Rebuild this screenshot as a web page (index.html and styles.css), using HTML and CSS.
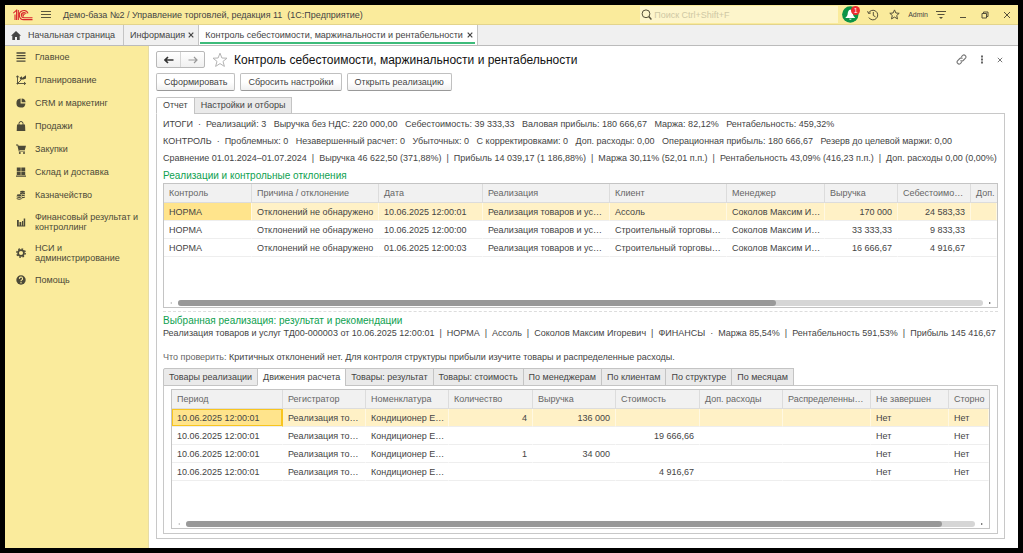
FILE: index.html
```html
<!DOCTYPE html>
<html lang="ru">
<head>
<meta charset="utf-8">
<title>Контроль себестоимости, маржинальности и рентабельности</title>
<link rel="stylesheet" href="styles.css">
</head>
<body>
<div class="window">
  <header class="titlebar">
    <svg class="logo" width="20" height="12" viewBox="0 0 20 12" fill="none" stroke="#d9252b" stroke-width="1.1"><path d="M0.3 4.2 3.6 1.2V11M2 5.4V11M5.3 1V11"/><path d="M15 4.4A4.5 4.5 0 1 0 11 10.6H19.5"/><path d="M13.2 4.8A2.6 2.6 0 1 0 11 8.7H19.5"/><path d="M11.8 5.6A1 1 0 1 0 11 6.9"/></svg>
    <button class="icon-btn" aria-label="Меню"><svg width="10" height="9" viewBox="0 0 10 9" stroke="#5b563c" stroke-width="1"><path d="M0 1.5H10M0 4.5H10M0 7.5H10"/></svg></button>
    <div class="app-name">Демо-база №2 / Управление торговлей, редакция 11&nbsp; (1С:Предприятие)</div>
    <label class="search">
      <svg width="11" height="11" viewBox="0 0 11 11" fill="none" stroke="#55503a"><circle cx="5" cy="4.8" r="3.9"/><path d="M7.8 7.6 10.4 10.4" stroke-width="1.4"/></svg>
      <input type="search" placeholder="Поиск Ctrl+Shift+F" aria-label="Поиск">
    </label>
    <button class="icon-btn bell" aria-label="Уведомления"><svg width="17" height="17" viewBox="0 0 17 17"><circle cx="8.3" cy="8.5" r="8.2" fill="#0c9446"/><path d="M8.3 3.6C6 4.2 5.9 6.4 5.6 8.5 5.4 10 4 11 3.3 12H13.3C12.6 11 11.2 10 11 8.5 10.7 6.4 10.6 4.2 8.3 3.6ZM7 12.8A1.4 1.4 0 0 0 9.7 12.8Z" fill="#fff"/></svg><span class="badge">1</span></button>
    <button class="icon-btn history" aria-label="История"><svg width="12" height="12" viewBox="0 0 12 12" fill="none" stroke="#55503a" stroke-width="1"><path d="M1.6 4A4.8 4.8 0 1 1 1.8 8.5M0.6 2.2 1.5 4.5 3.8 4M6.3 3V6.5L8.5 7.8"/></svg></button>
    <button class="icon-btn" aria-label="Избранное"><svg width="11" height="11" viewBox="0 0 11 11" fill="none" stroke="#55503a" stroke-width="1"><path d="M5.5 0.9 6.9 4 10.2 4.3 7.7 6.5 8.5 9.9 5.5 8.1 2.5 9.9 3.3 6.5 0.8 4.3 4.1 4Z"/></svg></button>
    <button class="user">Admin</button>
    <button class="icon-btn filter" aria-label="Настройка"><svg width="10" height="9" viewBox="0 0 10 9"><path d="M0 1.5H10M1.5 4.5H8.5" stroke="#55503a"/><path d="M3 7H7L5 9Z" fill="#55503a"/></svg></button>
    <button class="icon-btn win" aria-label="Свернуть"><svg width="8" height="8" viewBox="0 0 8 8" stroke="#55503a"><path d="M1 6.5H7"/></svg></button>
    <button class="icon-btn win" aria-label="Развернуть"><svg width="8" height="8" viewBox="0 0 8 8" fill="none" stroke="#55503a"><path d="M1 2.5H5.5V7H1ZM2.5 2.5V1H7V5.5H5.5"/></svg></button>
    <button class="icon-btn win" aria-label="Закрыть"><svg width="8" height="8" viewBox="0 0 8 8" stroke="#55503a"><path d="M1 1 7 7M7 1 1 7"/></svg></button>
  </header>

  <nav class="pages">
    <button class="page home"><svg width="10" height="9" viewBox="0 0 10 9" fill="#444"><path d="M5 0 10 4.8H8.7V9H6V6H4V9H1.3V4.8H0Z"/></svg>Начальная страница</button>
    <button class="page info">Информация<svg width="6" height="6" viewBox="0 0 6 6" stroke="#444" stroke-width="1.2"><path d="M0.7 0.7 5.3 5.3M5.3 0.7 0.7 5.3"/></svg></button>
    <button class="page current">Контроль себестоимости, маржинальности и рентабельности<svg width="6" height="6" viewBox="0 0 6 6" stroke="#444" stroke-width="1.2"><path d="M0.7 0.7 5.3 5.3M5.3 0.7 0.7 5.3"/></svg></button>
  </nav>

  <div class="body">
    <nav class="sidebar">
      <a href="#"><svg viewBox="0 0 10 10" stroke="#4b4938" stroke-width="1.3"><path d="M0.5 1H9.5M0.5 3.7H9.5M0.5 6.4H9.5M0.5 9.1H9.5"/></svg>Главное</a>
      <a href="#"><svg viewBox="0 0 10 10" fill="none" stroke="#4b4938" stroke-width="0.9"><path d="M1.5 9.5V1M0 2.5 1.5 0.7 3 2.5M0.5 8.5H9.5M8 7 9.7 8.5 8 10M1.5 8.5 5.5 4.5"/><path d="M4 2.5 6 1.2V3L10 0.3V3.6L7.5 4.6H4Z" fill="#4b4938" stroke="none"/></svg>Планирование</a>
      <a href="#"><svg viewBox="0 0 10 10" fill="#4b4938"><path d="M4.6 0.6V5.4H9.4A4.5 4.5 0 1 1 4.6 0.6Z"/><path d="M5.6 0.4A4.2 4.2 0 0 1 9.6 4.3H5.6Z"/></svg>CRM и маркетинг</a>
      <a href="#"><svg viewBox="0 0 10 10" fill="#4b4938"><path d="M1 3.5H9L9.3 10H0.7Z"/><path d="M3 4.5V2.5A2 2 0 0 1 7 2.5V4.5" fill="none" stroke="#4b4938"/></svg>Продажи</a>
      <a href="#"><svg viewBox="0 0 10 10" fill="#4b4938"><path d="M0 0.5H2L2.6 1.7H10L8.8 6H3.3L3.5 6.7H9V7.6H2.8L1.4 1.4H0Z"/><circle cx="3.8" cy="9" r="1"/><circle cx="8" cy="9" r="1"/></svg>Закупки</a>
      <a href="#"><svg viewBox="0 0 10 10" fill="#4b4938"><path d="M0.8 0.5H4.7V4H0.8ZM5.3 0.5H9.2V4H5.3ZM0.8 4.6H4.7V8H0.8ZM5.3 4.6H9.2V8H5.3ZM0 8.6H10V9.8H0Z"/></svg>Склад и доставка</a>
      <a href="#"><svg viewBox="0 0 10 10" fill="#4b4938"><ellipse cx="6.5" cy="1.8" rx="2.5" ry="1.1"/><path d="M4 2.6Q6.5 4 9 2.6V3.8Q6.5 5.2 4 3.8ZM6 5Q8 5 9 4.5V5.6Q8 6.2 6 6.2ZM6 7Q8 7 9 6.4V7.5Q8 8.2 6 8.2Z"/><ellipse cx="3.2" cy="5.3" rx="2.5" ry="1.1"/><path d="M0.7 6.2Q3.2 7.5 5.7 6.2V7.3Q3.2 8.6 0.7 7.3ZM0.7 8Q3.2 9.3 5.7 8V9Q3.2 10.4 0.7 9Z"/></svg>Казначейство</a>
      <a href="#" class="two-line"><svg viewBox="0 0 10 10" fill="#4b4938"><path d="M1 3H2.8V9H1ZM3.5 5H5.3V9H3.5ZM6 4H7.2V9H6ZM7.7 1.5H9.2V9H7.7ZM1 8.5H9.2V9.5H1Z"/></svg>Финансовый результат и контроллинг</a>
      <a href="#" class="two-line"><svg viewBox="0 0 10 10" fill="none" stroke="#4b4938"><circle cx="5" cy="5" r="2.9" stroke-width="1.7"/><circle cx="5" cy="5" r="4.2" stroke-width="1.4" stroke-dasharray="1.65 1.65"/></svg>НСИ и администрирование</a>
      <a href="#"><svg viewBox="0 0 10 10"><circle cx="5" cy="5" r="4.7" fill="#4b4938"/><path d="M3.4 3.9A1.6 1.6 0 1 1 5.7 5.1Q5 5.4 5 6.2" fill="none" stroke="#faeb9c" stroke-width="1.1"/><circle cx="5" cy="7.7" r="0.7" fill="#faeb9c"/></svg>Помощь</a>
    </nav>

    <main class="form">
      <div class="heading">
        <div class="arrows">
          <button aria-label="Назад"><svg width="10" height="8" viewBox="0 0 10 8" fill="none" stroke="#333" stroke-width="1.6"><path d="M1 4H9.5M4 1 1 4 4 7"/></svg></button>
          <button aria-label="Вперед"><svg width="10" height="8" viewBox="0 0 10 8" fill="none" stroke="#999" stroke-width="1.2"><path d="M0.5 4H9M6 1 9 4 6 7"/></svg></button>
        </div>
        <button class="icon-btn star" aria-label="В избранное"><svg width="16" height="16" viewBox="0 0 16 16" fill="none" stroke="#b4b4b4"><path d="M8 1.2 9.9 6 15 6.2 11 9.4 12.4 14.4 8 11.6 3.6 14.4 5 9.4 1 6.2 6.1 6Z"/></svg></button>
        <h1>Контроль себестоимости, маржинальности и рентабельности</h1>
        <div class="tools">
          <button class="icon-btn" aria-label="Ссылка"><svg width="11" height="11" viewBox="0 0 11 11" fill="none" stroke="#777" stroke-width="1.1"><path d="M4.5 6.5A2 2 0 0 0 7.2 6.5L9.5 4.2A2 2 0 0 0 6.7 1.4L5.3 2.8M6.5 4.5A2 2 0 0 0 3.8 4.5L1.5 6.8A2 2 0 0 0 4.3 9.6L5.7 8.2"/></svg></button>
          <button class="icon-btn" aria-label="Ещё"><svg width="4" height="9" viewBox="0 0 4 9" fill="#666"><path d="M1 0.5H3V2.5H1ZM1 3.5H3V5.5H1ZM1 6.5H3V8.5H1Z"/></svg></button>
          <button class="icon-btn" aria-label="Закрыть форму"><svg width="6" height="6" viewBox="0 0 6 6" stroke="#777"><path d="M0.8 0.8 5.2 5.2M5.2 0.8 0.8 5.2"/></svg></button>
        </div>
      </div>

      <div class="commands">
        <button>Сформировать</button>
        <button>Сбросить настройки</button>
        <button>Открыть реализацию</button>
      </div>

      <div class="tabs main-tabs" role="tablist">
        <button role="tab" aria-selected="true">Отчет</button>
        <button role="tab" aria-selected="false">Настройки и отборы</button>
      </div>

      <section class="panel">
        <p class="summary">ИТОГИ  ·  Реализаций: 3   Выручка без НДС: 220 000,00   Себестоимость: 39 333,33   Валовая прибыль: 180 666,67   Маржа: 82,12%   Рентабельность: 459,32%</p>
        <p class="summary">КОНТРОЛЬ  ·  Проблемных: 0   Незавершенный расчет: 0   Убыточных: 0   С корректировками: 0   Доп. расходы: 0,00   Операционная прибыль: 180 666,67   Резерв до целевой маржи: 0,00</p>
        <p class="summary">Сравнение 01.01.2024–01.07.2024  |  Выручка 46 622,50 (371,88%)  |  Прибыль 14 039,17 (1 186,88%)  |  Маржа 30,11% (52,01 п.п.)  |  Рентабельность 43,09% (416,23 п.п.)  |  Доп. расходы 0,00 (0,00%)</p>

        <h2>Реализации и контрольные отклонения</h2>
        <div class="grid sales">
          <table>
            <colgroup><col class="w88"><col class="w127"><col class="w104"><col class="w127"><col class="w117"><col class="w98"><col class="w73"><col class="w73"><col></colgroup>
            <thead><tr><th>Контроль</th><th>Причина / отклонение</th><th>Дата</th><th>Реализация</th><th>Клиент</th><th>Менеджер</th><th>Выручка</th><th>Себестоимо…</th><th>Доп.</th></tr></thead>
            <tbody>
              <tr class="selected"><td class="active">НОРМА</td><td>Отклонений не обнаружено</td><td>10.06.2025 12:00:01</td><td>Реализация товаров и ус…</td><td>Ассоль</td><td>Соколов Максим И…</td><td class="num">170 000</td><td class="num">24 583,33</td><td></td></tr>
              <tr><td>НОРМА</td><td>Отклонений не обнаружено</td><td>10.06.2025 12:00:00</td><td>Реализация товаров и ус…</td><td>Строительный торговы…</td><td>Соколов Максим И…</td><td class="num">33 333,33</td><td class="num">9 833,33</td><td></td></tr>
              <tr><td>НОРМА</td><td>Отклонений не обнаружено</td><td>01.06.2025 12:00:03</td><td>Реализация товаров и ус…</td><td>Строительный торговы…</td><td>Соколов Максим И…</td><td class="num">16 666,67</td><td class="num">4 916,67</td><td></td></tr>
            </tbody>
          </table>
          <div class="scroll"><i class="prev"></i><div class="track"><div class="thumb" style="width:74.3%"></div></div><i class="next"></i></div>
        </div>

        <div class="splitter"></div>
        <h2 class="second">Выбранная реализация: результат и рекомендации</h2>
        <p class="chosen">Реализация товаров и услуг ТД00-000003 от 10.06.2025 12:00:01  |  НОРМА  |  Ассоль  |  Соколов Максим Игоревич  |  ФИНАНСЫ  ·  Маржа 85,54%  |  Рентабельность 591,53%  |  Прибыль 145 416,67</p>
        <p class="advice"><span>Что проверить:</span> Критичных отклонений нет. Для контроля структуры прибыли изучите товары и распределенные расходы.</p>

        <div class="tabs sub-tabs" role="tablist">
          <button role="tab" aria-selected="false">Товары реализации</button>
          <button role="tab" aria-selected="true">Движения расчета</button>
          <button role="tab" aria-selected="false">Товары: результат</button>
          <button role="tab" aria-selected="false">Товары: стоимость</button>
          <button role="tab" aria-selected="false">По менеджерам</button>
          <button role="tab" aria-selected="false">По клиентам</button>
          <button role="tab" aria-selected="false">По структуре</button>
          <button role="tab" aria-selected="false">По месяцам</button>
        </div>
        <div class="sub-panel">
          <div class="grid moves">
            <table>
              <colgroup><col class="w111"><col class="w83"><col class="w83"><col class="w84"><col class="w83"><col class="w84"><col class="w83"><col class="w88"><col class="w78"><col></colgroup>
              <thead><tr><th>Период</th><th>Регистратор</th><th>Номенклатура</th><th>Количество</th><th>Выручка</th><th>Стоимость</th><th>Доп. расходы</th><th>Распределенны…</th><th>Не завершен</th><th>Сторно</th></tr></thead>
              <tbody>
                <tr class="selected"><td class="active framed">10.06.2025 12:00:01</td><td>Реализация то…</td><td>Кондиционер Е…</td><td class="num">4</td><td class="num">136 000</td><td></td><td></td><td></td><td>Нет</td><td>Нет</td></tr>
                <tr><td>10.06.2025 12:00:01</td><td>Реализация то…</td><td>Кондиционер Е…</td><td></td><td></td><td class="num">19 666,66</td><td></td><td></td><td>Нет</td><td>Нет</td></tr>
                <tr><td>10.06.2025 12:00:01</td><td>Реализация то…</td><td>Кондиционер Е…</td><td class="num">1</td><td class="num">34 000</td><td></td><td></td><td></td><td>Нет</td><td>Нет</td></tr>
                <tr><td>10.06.2025 12:00:01</td><td>Реализация то…</td><td>Кондиционер Е…</td><td></td><td></td><td class="num">4 916,67</td><td></td><td></td><td>Нет</td><td>Нет</td></tr>
              </tbody>
            </table>
            <div class="scroll"><i class="prev"></i><div class="track"><div class="thumb" style="width:95.8%"></div></div><i class="next"></i></div>
          </div>
        </div>
      </section>
    </main>
  </div>
</div>
</body>
</html>
```

FILE: styles.css
```css
* { box-sizing: border-box; }
body {
  margin: 0;
  min-height: 100vh;
  padding: 5px;
  display: flex;
  background: #000;
  color: #444;
  font: 9px/10px "Liberation Sans", Arial, sans-serif;
}
button, input { font: inherit; color: inherit; }
button { margin: 0; padding: 0; white-space: nowrap; }
svg { display: block; flex: none; }
p, h1, h2 { margin: 0; font-weight: normal; }

.window { flex: 1; min-width: 0; display: flex; flex-direction: column; background: #fff; }

.titlebar {
  display: flex;
  align-items: center;
  height: 20px;
  padding: 0 0 0 8px;
  background: #faeb9c;
  border-bottom: 1px solid #e3d48c;
}
.icon-btn { display: flex; align-items: center; justify-content: center; border: 0; background: none; }
.logo { margin-right: 8px; }
.app-name { flex: 1; margin-left: 12px; white-space: nowrap; }
.search {
  display: flex;
  align-items: center;
  width: 198px;
  height: 17px;
  padding-left: 1px;
  background: #fdf5cb;
}
.search input { flex: 1; min-width: 0; padding: 0 2px; border: 0; outline: 0; background: none; }
.search input::placeholder { color: #cfc8a4; opacity: 1; }
.bell { position: relative; margin: 0 8px 0 4px; }
.badge {
  position: absolute;
  top: 0;
  right: -1px;
  width: 9px;
  height: 9px;
  border-radius: 50%;
  background: #ee2b2f;
  color: #fff;
  font-size: 7px;
  line-height: 9px;
}
.history { margin-right: 10px; }
.user { margin: 0 8px; border: 0; background: none; font-size: 7px; }
.filter { margin-right: 6px; }
.win { width: 22px; }

.pages { display: flex; height: 21px; background: #f0f0f0; border-bottom: 1px solid #bbb; }
.page { display: flex; align-items: center; border: 0; border-right: 1px solid #c4c4c4; background: none; }
.home { gap: 7px; padding: 0 8px 0 6px; }
.info { gap: 3px; padding: 0 4px 0 6px; }
.page.current {
  gap: 4px;
  padding: 0 4px 0 6px;
  background: linear-gradient(#3dbb7a, #3dbb7a) 1px 17px / calc(100% - 3px) 2px no-repeat, #fff;
}

.body { flex: 1; display: flex; }
.sidebar {
  width: 144px;
  display: flex;
  flex-direction: column;
  gap: 13px;
  padding: 6px 4px 0 11px;
  background: #faeb9c;
  border-right: 1px solid #e6dca6;
}
.sidebar a { display: flex; align-items: center; gap: 9px; color: #4b4938; text-decoration: none; }
.sidebar svg { width: 10px; height: 10px; }
.sidebar .two-line { margin: -1px 0; }

.form { flex: 1; min-width: 0; display: flex; flex-direction: column; padding: 5px 13px 9px 7px; }
.heading { display: flex; align-items: center; height: 17px; }
.arrows { display: flex; width: 49px; height: 17px; border: 1px solid #b8b8b8; border-radius: 2px; background: linear-gradient(#fff, #f0f0f0); }
.arrows button { flex: 1; display: flex; align-items: center; justify-content: center; border: 0; background: none; }
.arrows button + button { border-left: 1px solid #d5d5d5; }
.star { margin: 0 6px 0 7px; }
h1 { flex: 1; color: #111; font-size: 12px; line-height: 16px; white-space: nowrap; }
.tools { display: flex; gap: 13px; margin-right: 2px; }

.commands { display: flex; gap: 5px; margin-top: 5px; }
.commands button { height: 18px; padding: 0 7px 1px; border: 1px solid #c0c0c0; border-bottom-color: #999; border-radius: 2px; background: linear-gradient(#fff 50%, #f0f0f0); }

.tabs { display: flex; position: relative; z-index: 1; }
.tabs button { height: 17px; margin-left: -1px; padding: 0 6px 1px; border: 1px solid #c4c4c4; background: #eaeaea; }
.tabs button:first-child { margin-left: 0; border-top-left-radius: 2px; }
.tabs button[aria-selected="true"] { background: #fff; border-bottom-color: #fff; }
.main-tabs { margin: 6px 0 -1px; }
.sub-tabs { margin: 6px 0 -1px; }
.sub-tabs button { height: 18px; padding: 0 5px; }

.panel { flex: 1; display: flex; flex-direction: column; padding: 5px 6px 4px; border: 1px solid #c8c8c8; }
.summary, .chosen { white-space: pre; }
.summary { margin-bottom: 7px; }
h2 { color: #0d9f4f; font-size: 10px; line-height: 12px; }
.panel h2 { margin-bottom: 1px; }
.panel h2.second { margin: 3px 0 1px; }
.advice { margin-top: 14px; }
.advice span { color: #666; }

.grid { display: flex; flex-direction: column; border: 1px solid #c4c4c4; overflow: hidden; }
.sales { height: 125px; }
.moves { flex: 1; }
table { width: 100%; table-layout: fixed; border-collapse: separate; border-spacing: 0; }
th, td { padding: 0 1px 0 5px; overflow: hidden; text-align: left; text-overflow: ellipsis; white-space: nowrap; font-weight: normal; }
th { height: 19px; color: #666; background: #f1f1f1; border-right: 1px solid #dcdcdc; border-bottom: 1px solid #dcdcdc; }
td { height: 18px; border-bottom: 1px solid #eee; border-right: 1px solid transparent; }
th:last-child { border-right: 0; }
.num { padding-right: 5px; text-align: right; }
.selected td { background: #fff1c6; border-right-color: #fff8e2; }
.selected td.active { background: #ffe48c; }
.selected td.framed { border-right-color: #f8c51f; box-shadow: inset 0 0 0 1px #f8c51f; }
.w73 { width: 73px; } .w78 { width: 78px; } .w83 { width: 83px; } .w84 { width: 84px; }
.w88 { width: 88px; } .w98 { width: 98px; } .w104 { width: 104px; } .w111 { width: 111px; }
.w117 { width: 117px; } .w127 { width: 127px; }

.scroll { display: flex; align-items: center; gap: 6px; margin-top: auto; padding: 0 6px 1px; }
.track { flex: 1; height: 6px; border-radius: 3px; background: #d6d6d6; }
.thumb { height: 100%; border-radius: 3px; background: #999; }
.prev, .next { border: 1px solid transparent; border-width: 1px 0; }
.prev { border-right: 2px solid #bbb; }
.next { border-left: 2px solid #555; }

.splitter { margin-top: 3px; border-top: 1px dashed #ddd; }
.sub-panel { flex: 1; display: flex; flex-direction: column; padding: 3px 7px 4px; border: 1px solid #c8c8c8; }
```
